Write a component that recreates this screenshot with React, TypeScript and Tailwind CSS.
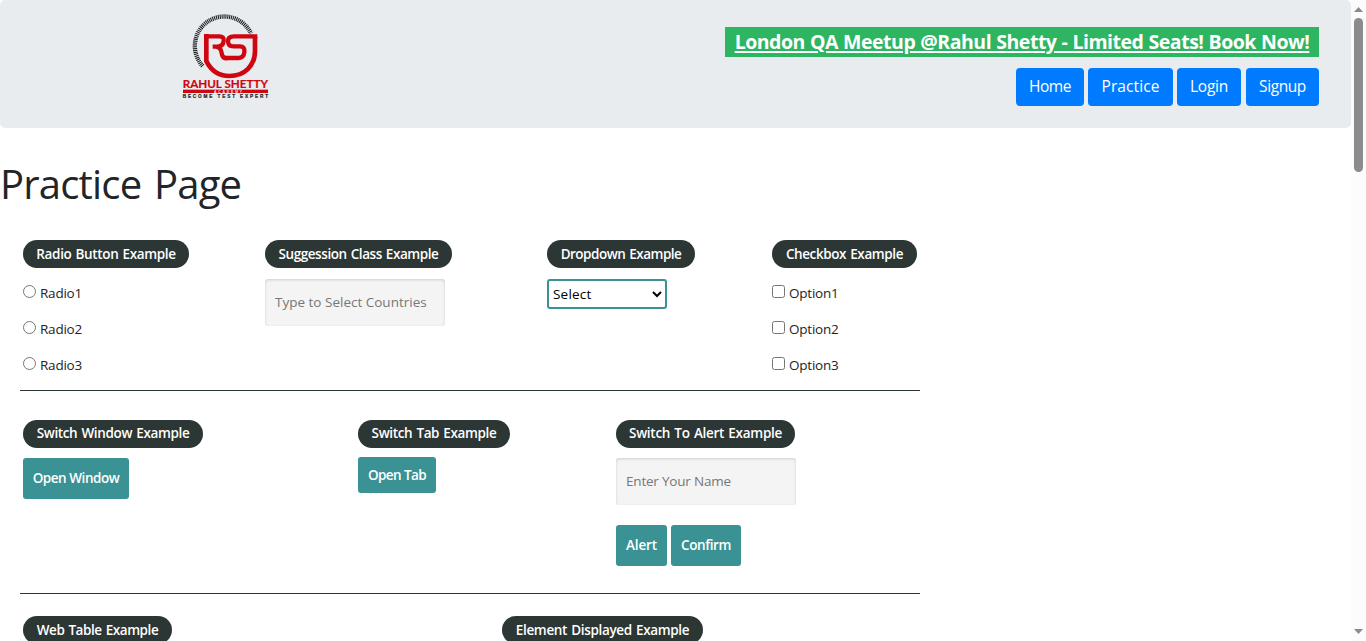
import type { ReactNode } from "react";

function Logo() {
  return (
    <svg viewBox="36 40 262 256" className="block h-[85.33px] w-[87.33px]" aria-label="Rahul Shetty Academy">
      <path d="M98 199A88.5 88.5 0 1 1 243 101" fill="none" stroke="#1d1d1f" strokeWidth="13" strokeDasharray="3.2 2.4" />
      <path d="M109 103V184C124 215 150 229 178 229C224 229 254 198 255 156V110" fill="none" stroke="#cf0510" strokeWidth="14" />
      <path d="M102 110H148Q163 110 161 124Q159 141 141 141H128M138 141Q153 143 155 160Q156 176 172 176" fill="none" stroke="#cf0510" strokeWidth="13" />
      <path d="M262 110H192Q174 110 174 124Q174 140 190 140H210Q225 140 223 158Q221 175 206 175H168" fill="none" stroke="#cf0510" strokeWidth="13" />
      <text x="38" y="265" textLength="256" lengthAdjust="spacingAndGlyphs" fill="#cf0510" stroke="#cf0510" strokeWidth="0.5" fontFamily="Lato" fontSize="32" fontWeight="700">RAHUL SHETTY</text>
      <rect x="39" y="270" width="255" height="10" fill="#cf0510" />
      <text x="132" y="279" textLength="84" fill="#e8ecef" fontFamily="Liberation Sans" fontSize="10" fontWeight="700">ACADEMY</text>
      <text x="38" y="294" textLength="256" lengthAdjust="spacing" fill="#1d1d1f" stroke="#1d1d1f" strokeWidth="0.6" fontFamily="Liberation Sans" fontSize="14" fontWeight="700">BECOME TEST EXPERT</text>
    </svg>
  );
}

function Legend({ children, className }: { children: ReactNode; className: string }) {
  return (
    <div className={`flex h-7 items-center justify-center whitespace-nowrap rounded-full bg-[#2b3635] text-[13.5px] font-semibold text-white [word-spacing:1px] ${className}`}>
      {children}
    </div>
  );
}

function NavButton({ children, className }: { children: ReactNode; className: string }) {
  return (
    <button className={`h-[38px] rounded bg-[#007bff] text-[15.5px] font-medium text-white ${className}`}>{children}</button>
  );
}

function TealButton({ children, className }: { children: ReactNode; className: string }) {
  return (
    <button className={`whitespace-nowrap rounded-[3px] bg-[#3a9295] text-[13.5px] font-semibold text-white ${className}`}>
      {children}
    </button>
  );
}

function TextField({ placeholder, className }: { placeholder: string; className: string }) {
  return (
    <input
      placeholder={placeholder}
      className={`block h-[47px] w-[180px] rounded-[3px] bg-[#f4f4f4] px-2.5 pb-0.5 text-[13.5px] shadow-[inset_0_1px_3px_rgba(0,0,0,0.16)] placeholder:text-[#777] ${className}`}
    />
  );
}

function Choice({ type, label }: { type: "radio" | "checkbox"; label: string }) {
  return (
    <label className="flex h-9 items-start text-[13.5px] leading-[21px] tracking-[-0.22px]">
      <input type={type} name={type} className="mr-1 mt-[3px] size-[13px]" />
      <span className="pt-px">{label}</span>
    </label>
  );
}

function Scrollbar() {
  return (
    <div className="flex w-[15px] shrink-0 flex-col items-center bg-[#fcfcfc] text-[#8b8b8b]">
      <svg viewBox="0 0 9 5" className="mt-[7px] h-[5px] w-[9px]"><path d="M0 5L4.5 0L9 5Z" fill="currentColor" /></svg>
      <div className="mt-[6px] h-[154px] w-[9px] rounded-full bg-[#8b8b8b]" />
      <svg viewBox="0 0 9 5" className="mb-[7px] mt-auto h-[5px] w-[9px]"><path d="M0 0H9L4.5 5Z" fill="currentColor" /></svg>
    </div>
  );
}

export default function App() {
  return (
    <div className="flex h-[641px] w-[1366px] overflow-hidden bg-white font-['Open_Sans',sans-serif] text-[#212529]">
      <div className="min-w-0 flex-1 overflow-hidden">
        <header className="flex h-32 justify-between rounded-[5px] bg-[#e8ecef] pl-[182px] pr-8">
          <div className="pt-[13.3px]"><Logo /></div>
          <div className="flex flex-col items-end pt-[27px]">
            <a className="flex h-[30px] w-[594px] items-center justify-center whitespace-nowrap bg-[#2db562] text-[19.5px] font-bold tracking-[-0.48px] text-white underline decoration-2 underline-offset-2 [word-spacing:0.5px]">
              London QA Meetup @Rahul Shetty - Limited Seats! Book Now!
            </a>
            <nav className="mt-[11px] flex">
              <NavButton className="w-[68px] tracking-[-0.5px]">Home</NavButton>
              <NavButton className="ml-1 w-[85px] tracking-[0.1px]">Practice</NavButton>
              <NavButton className="ml-1 w-16 tracking-[-0.2px]">Login</NavButton>
              <NavButton className="ml-[5px] w-[73px] tracking-[-0.4px]">Signup</NavButton>
            </nav>
          </div>
        </header>

        <h1 className="mt-8 h-12 whitespace-nowrap text-[40px] leading-[48px] tracking-[-0.8px] [word-spacing:3px]">Practice Page</h1>

        <main className="ml-5 w-[900px]">
          <section className="flex h-[183px] border-b border-[#2b3635] pl-[3px] pt-8">
            <div className="w-[242px]">
              <Legend className="w-[166px] tracking-[-0.36px]">Radio Button Example</Legend>
              <div className="mt-[14px]">
                <Choice type="radio" label="Radio1" />
                <Choice type="radio" label="Radio2" />
                <Choice type="radio" label="Radio3" />
              </div>
            </div>
            <div className="w-[282px]">
              <Legend className="w-[187px] tracking-[-0.44px]">Suggession Class Example</Legend>
              <TextField placeholder="Type to Select Countries" className="mt-[11px]" />
            </div>
            <div className="w-[225px]">
              <Legend className="w-[148px] tracking-[-0.5px]">Dropdown Example</Legend>
              <select className="mt-[11px] block h-[30px] w-[120px] rounded-[3px] border-2 border-[#3a9295] bg-white text-[13.5px] tracking-[0.2px] text-black">
                <option>Select</option>
              </select>
            </div>
            <div>
              <Legend className="w-[145px] tracking-[-0.4px]">Checkbox Example</Legend>
              <div className="mt-[14px]">
                <Choice type="checkbox" label="Option1" />
                <Choice type="checkbox" label="Option2" />
                <Choice type="checkbox" label="Option3" />
              </div>
            </div>
          </section>

          <section className="flex h-[203px] border-b border-[#2b3635] pl-[3px] pt-[29px]">
            <div className="w-[335px]">
              <Legend className="w-[180px] pb-0.5 tracking-[-0.36px]">Switch Window Example</Legend>
              <TealButton className="mt-[10px] h-[41px] w-[106px] tracking-[-0.45px]">Open Window</TealButton>
            </div>
            <div className="w-[258px]">
              <Legend className="w-[152px] pb-0.5 tracking-[-0.36px]">Switch Tab Example</Legend>
              <TealButton className="mt-[9px] h-9 w-[78px] tracking-[-0.6px]">Open Tab</TealButton>
            </div>
            <div>
              <Legend className="w-[179px] pb-0.5 tracking-[-0.28px]">Switch To Alert Example</Legend>
              <TextField placeholder="Enter Your Name" className="mt-[10px] tracking-[-0.2px]" />
              <div className="mt-5 flex gap-1">
                <TealButton className="h-[41px] w-[51px] tracking-[-0.1px]">Alert</TealButton>
                <TealButton className="h-[41px] w-[70px] tracking-[-0.4px]">Confirm</TealButton>
              </div>
            </div>
          </section>

          <section className="flex pl-[3px] pt-[22px]">
            <div className="w-[479px]"><Legend className="w-[149px] tracking-[-0.44px]">Web Table Example</Legend></div>
            <Legend className="w-[201px] tracking-[-0.34px]">Element Displayed Example</Legend>
          </section>
        </main>
      </div>
      <Scrollbar />
    </div>
  );
}
